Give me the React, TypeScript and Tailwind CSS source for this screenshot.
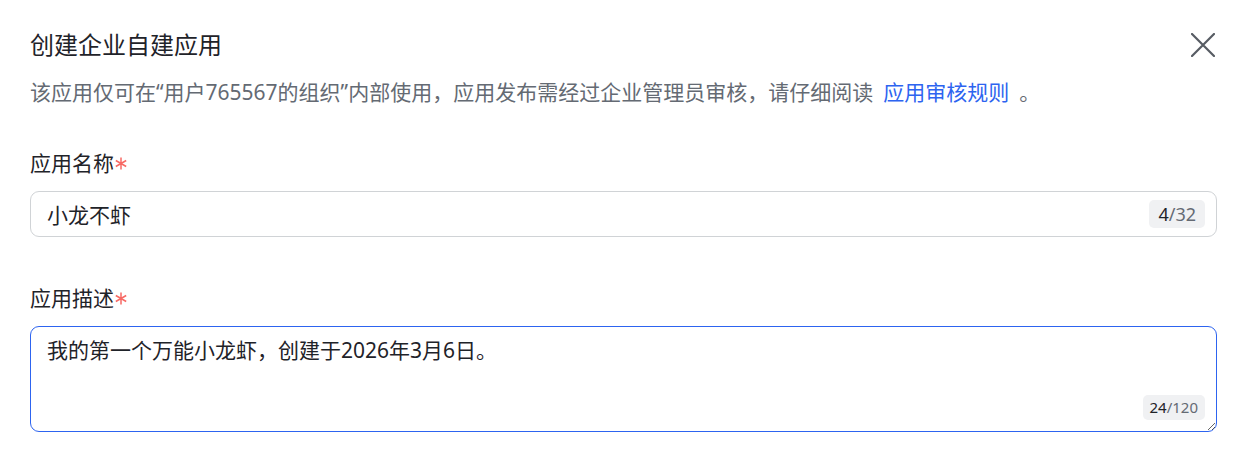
import React from 'react';

const font = { fontFamily: '"Noto Sans", "Noto Sans CJK SC", sans-serif' };

function CloseIcon() {
  return (
    <svg width="24" height="24" viewBox="0 0 24 24" fill="none" className="text-[#575c63]">
      <path d="M1 1L23 23M23 1L1 23" stroke="currentColor" strokeWidth="2.2" strokeLinecap="round" />
    </svg>
  );
}

function Star() {
  return (
    <svg width="12" height="13" viewBox="0 0 12 13" className="ml-[1px] inline-block align-[1px] text-[#f76964]">
      <path
        d="M6 0.5V12.5M0.8 3.5L11.2 9.5M11.2 3.5L0.8 9.5"
        stroke="currentColor"
        strokeWidth="1.5"
      />
    </svg>
  );
}

function Label({ children }: { children: React.ReactNode }) {
  return (
    <div className="text-[21px] leading-[32px] text-[#1f2329]">
      {children}
      <Star />
    </div>
  );
}

export default function App() {
  return (
    <div style={font} className="w-[1242px] h-[468px] bg-white pl-[30px] pr-[25px] pt-[29px]">
      {/* header */}
      <div className="flex items-center justify-between">
        <h1 className="text-[24px] leading-[32px] font-normal text-[#1f2329]">创建企业自建应用</h1>
        <button className="mr-[-2px] flex h-8 w-8 items-center justify-center">
          <CloseIcon />
        </button>
      </div>
      <p className="mt-[15px] text-[21px] leading-[32px] text-[#646a73]">
        该应用仅可在“用户765567的组织”内部使用，应用发布需经过企业管理员审核，请仔细阅读
        <a className="mx-[10px] text-[#2d64f0]">应用审核规则</a>
        。
      </p>

      {/* name */}
      <div className="mt-[39px]">
        <Label>应用名称</Label>
        <div className="relative mt-[12px]">
          <input
            readOnly
            defaultValue="小龙不虾"
            style={font}
            className="h-[46px] w-full rounded-[9px] border border-[#d0d3d6] pl-[16px] pr-[80px] text-[21px] text-[#1f2329] outline-none"
          />
          <span className="absolute right-[12px] top-[9px] flex h-[28px] items-center rounded-[5px] bg-[#f0f1f3] px-[9px] text-[18px] text-[#1f2329]">
            4<span className="text-[#646a73]">/32</span>
          </span>
        </div>
      </div>

      {/* description */}
      <div className="mt-[45px]">
        <Label>应用描述</Label>
        <div className="relative mt-[12px]">
          <textarea
            readOnly
            defaultValue="我的第一个万能小龙虾，创建于2026年3月6日。"
            style={font}
            className="block h-[106px] w-full resize-y rounded-[9px] border border-[#2d64f0] px-[16px] pt-[7px] text-[21px] leading-[32px] text-[#1f2329] outline-none"
          />
          <span className="absolute bottom-[12px] right-[12px] flex h-[25px] items-center rounded-[5px] bg-[#f0f1f3] px-[7px] text-[15px] text-[#1f2329]">
            24<span className="text-[#646a73]">/120</span>
          </span>
        </div>
      </div>
    </div>
  );
}
